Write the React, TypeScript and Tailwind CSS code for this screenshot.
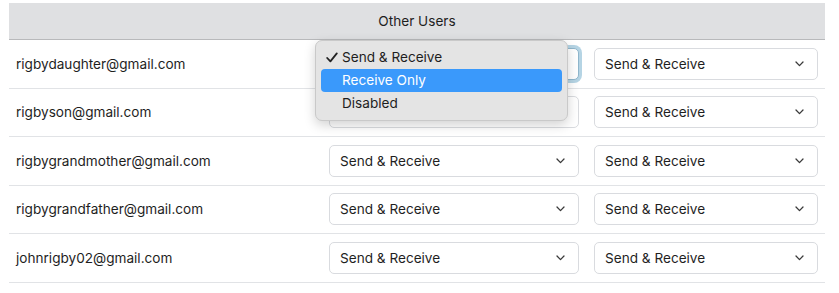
import React from "react";

const USERS = [
  "rigbydaughter@gmail.com",
  "rigbyson@gmail.com",
  "rigbygrandmother@gmail.com",
  "rigbygrandfather@gmail.com",
  "johnrigby02@gmail.com",
];

function Chevron() {
  return (
    <svg width="9" height="6" viewBox="0 0 9 6" className="shrink-0">
      <polyline points="1,1 4.5,4.6 8,1" fill="none" stroke="#3a3a3a" strokeWidth="1.3" strokeLinecap="round" strokeLinejoin="round" />
    </svg>
  );
}

function Select({ width, focused }: { width: string; focused?: boolean }) {
  return (
    <div
      className={`${width} h-[32px] flex items-center justify-between pl-[10px] pr-[13px] rounded-[5px] bg-white border ${
        focused ? "border-[#8fb6cc] ring-[3px] ring-[#b5d4e4]" : "border-[#d9dbdf]"
      }`}
    >
      <span className="text-[13.6px] text-[#1f1f1f]">Send &amp; Receive</span>
      <Chevron />
    </div>
  );
}

function Menu() {
  return (
    <div className="absolute left-[315px] top-[40px] w-[253px] py-[5px] rounded-[7px] bg-[#e4e4e4] border border-[#c9c9c9] shadow-[0_4px_12px_rgba(0,0,0,0.18)] text-[13.6px]">
      <div className="h-[23px] flex items-center pl-[10px] text-[#1e1e1e]">
        <svg width="12" height="11" viewBox="0 0 12 11" className="mr-[4px]">
          <polyline points="1.2,6 4.4,9.4 10.8,1.4" fill="none" stroke="#222" strokeWidth="1.8" strokeLinecap="round" strokeLinejoin="round" />
        </svg>
        <span>Send &amp; Receive</span>
      </div>
      <div className="h-[23px] mx-[5px] flex items-center pl-[21px] rounded-[4px] bg-[#3a99fb] text-white">
        Receive Only
      </div>
      <div className="h-[23px] flex items-center pl-[26px] text-[#1e1e1e]">Disabled</div>
    </div>
  );
}

export default function App() {
  return (
    <div className="relative w-[839px] h-[293px] bg-white pt-[3px] pl-[9px] pr-[14px] overflow-hidden" style={{ fontFamily: "Inter, 'Noto Sans', sans-serif" }}>
      <div className="h-[37px] bg-[#dfe0e2] border-b border-[#b8b9bb] flex items-center justify-center text-[13.6px] text-[#1e1e1e]">
        Other Users
      </div>
      {USERS.map((u, i) => (
        <div key={u} className="h-[48.5px] border-b border-[#e1e3e6] flex items-center">
          <div className="w-[320px] pl-[7px] text-[13.6px] text-[#1e1e1e]">{u}</div>
          <Select width="w-[250px]" focused={i === 0} />
          <div className="w-[15px]" />
          <Select width="w-[224px]" />
        </div>
      ))}
      <Menu />
    </div>
  );
}
